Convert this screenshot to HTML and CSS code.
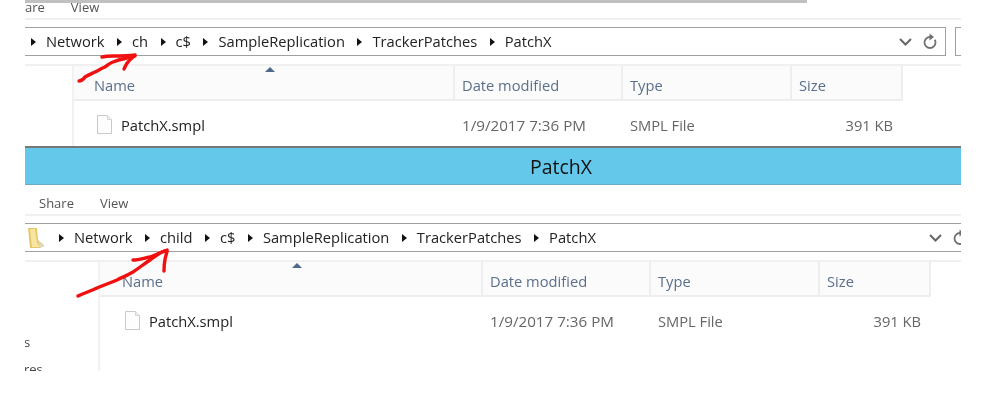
FILE: index.html
```html
<!DOCTYPE html>
<html lang="en">
<head>
  <meta charset="UTF-8">
  <meta name="viewport" content="width=device-width, initial-scale=1.0">
  <title>PatchX</title>
  <link rel="stylesheet" href="styles.css">
</head>
<body>
  <div class="shot">
    <div class="top-strip"></div>
    <div class="menu menu-first">
      <span class="menu-share">are</span>
      <span>View</span>
    </div>
    <div class="addr-row">
      <div class="addr">
        <div class="crumbs">
          <i class="sep"></i><span>Network</span>
          <i class="sep"></i><span>ch</span>
          <i class="sep"></i><span>c$</span>
          <i class="sep"></i><span>SampleReplication</span>
          <i class="sep"></i><span>TrackerPatches</span>
          <i class="sep"></i><span>PatchX</span>
        </div>
        <svg class="chev" width="13" height="8" viewBox="0 0 13 8"><path d="M1 1l5.500 5.500L12 1" fill="none" stroke="#666" stroke-width="2"/></svg>
        <svg class="refresh" width="14" height="17" viewBox="0 0 14 17"><path d="M7 4a5.500 5.500 0 1 0 5.500 5.500c0-1-.3-2-.8-2.800" fill="none" stroke="#707070" stroke-width="1.800"/><path d="M6.500.5v7l4.500-3.500z" fill="#707070"/></svg>
      </div>
      <div class="search-box"></div>
    </div>
    <div class="files">
      <div class="head">
        <div class="col col-name"><b class="sort"></b>Name</div>
        <div class="col col-date">Date modified</div>
        <div class="col col-type">Type</div>
        <div class="col col-size">Size</div>
      </div>
      <div class="row">
        <div class="cell col-name">
          <svg class="doc" width="17" height="19" viewBox="0 0 17 19"><path d="M1.500.5h10l4 4v14h-14z" fill="#fdfdfd" stroke="#c9c9c9"/><path d="M11.500.5v4h4" fill="#efefef" stroke="#d5d5d5"/></svg>
          <span class="fname">PatchX.smpl</span>
        </div>
        <div class="cell col-date">1/9/2017 7:36 PM</div>
        <div class="cell col-type">SMPL File</div>
        <div class="cell col-size">391 KB</div>
      </div>
    </div>

    <div class="title">PatchX</div>
    <div class="menu menu-second">
      <span>Share</span>
      <span>View</span>
    </div>
    <div class="addr-row addr-row-second">
      <div class="addr">
        <svg class="folder" width="17" height="21" viewBox="0 0 17 21"><path d="M0 1h9l1 12 6 5v1l-4 2H2z" fill="#e6c767"/><path d="M2 2h5l2 14 3 4H4z" fill="#f7e6a0"/><path d="M10 13l6 6-4 2-1-4z" fill="#dcd8c8"/></svg>
        <div class="crumbs">
          <i class="sep"></i><span>Network</span>
          <i class="sep"></i><span>child</span>
          <i class="sep"></i><span>c$</span>
          <i class="sep"></i><span>SampleReplication</span>
          <i class="sep"></i><span>TrackerPatches</span>
          <i class="sep"></i><span>PatchX</span>
        </div>
        <svg class="chev" width="13" height="8" viewBox="0 0 13 8"><path d="M1 1l5.500 5.500L12 1" fill="none" stroke="#666" stroke-width="2"/></svg>
        <svg class="refresh" width="14" height="17" viewBox="0 0 14 17"><path d="M7 4a5.500 5.500 0 1 0 5.500 5.500c0-1-.3-2-.8-2.800" fill="none" stroke="#707070" stroke-width="1.800"/><path d="M6.500.5v7l4.500-3.500z" fill="#707070"/></svg>
      </div>
    </div>
    <div class="lower">
      <div class="nav">
        <span>s</span>
        <span>res</span>
      </div>
      <div class="files files-second">
        <div class="head">
          <div class="col col-name"><b class="sort"></b>Name</div>
          <div class="col col-date">Date modified</div>
          <div class="col col-type">Type</div>
          <div class="col col-size">Size</div>
        </div>
        <div class="row">
          <div class="cell col-name">
            <svg class="doc" width="17" height="19" viewBox="0 0 17 19"><path d="M1.500.5h10l4 4v14h-14z" fill="#fdfdfd" stroke="#c9c9c9"/><path d="M11.500.5v4h4" fill="#efefef" stroke="#d5d5d5"/></svg>
            <span class="fname">PatchX.smpl</span>
          </div>
          <div class="cell col-date">1/9/2017 7:36 PM</div>
          <div class="cell col-type">SMPL File</div>
          <div class="cell col-size">391 KB</div>
        </div>
      </div>
    </div>
  </div>

  <!-- hand drawn red arrows on top of the screenshot -->
  <svg class="scribble" width="982" height="412" viewBox="0 0 982 412">
    <path d="M79 81c2 0 4-1 6-4 3-2 6-3 10-5 4-2 7-4 10-5 3-2 5-4 8-5 5-2 9-3 14-4 3-1 5-2 8-2" />
    <path d="M102 57c4-1 7-1 11-1 8 0 15 0 22-1-2 3-5 4-7 7-2 2-3 5-4 7" />
    <path d="M78 296c6-3 13-5 19-8 7-3 13-5 20-8 6-3 11-5 16-8 6-4 11-8 17-12 4-3 8-6 12-8 2-1 3-1 5-1" />
    <path d="M133 260c6 0 11-2 17-3 6-2 11-5 17-7 0 4-2 7-2 10-1 4-1 7-1 11" />
  </svg>
</body>
</html>
```

FILE: styles.css
```css
body {
  margin: 0;
  background: white;
  font-family: "Open Sans", "Noto Sans", sans-serif;
  font-size: 14.7px;
  color: #222;
  overflow: hidden;
}
.shot {
  width: 936px;
  margin-left: 25px;
  overflow: hidden;
  filter: blur(0.35px);
}
.top-strip {
  width: 782px;
  height: 3px;
  background: #c0c0c0;
}
.menu {
  display: flex;
  font-size: 13px;
  color: #555;
  border-bottom: 2px solid #f0f0f0;
}
.menu-first {
  height: 15px;
  line-height: 8px;
  gap: 26px;
}
.menu-second {
  height: 29px;
  padding-left: 14px;
  line-height: 36px;
  gap: 26px;
}
.addr-row {
  display: flex;
  gap: 9px;
  padding-top: 7px;
  height: 29px;
  padding-bottom: 8px;
  border-bottom: 2px solid #f0f0f0;
}
.addr {
  flex: 1;
  display: flex;
  align-items: center;
  border: 1px solid #a0a0a0;
  border-left: 0;
  box-sizing: border-box;
  height: 29px;
  padding-right: 8px;
  color: #222;
}
.addr-row-second .addr {
  border-right: 0;
  padding-right: 0;
}
.search-box {
  width: 6px;
  height: 29px;
  box-sizing: border-box;
  border: 1px solid #a0a0a0;
  border-right: 0;
}
.crumbs {
  flex: 1;
  display: flex;
  align-items: center;
  padding-left: 6px;
  padding-bottom: 2px;
}
.folder {
  margin-left: 3px;
  margin-right: 8px;
}
.sep {
  width: 0;
  height: 0;
  margin-top: 2px;
  margin-right: 10px;
  border-left: 5px solid #111;
  border-top: 4.5px solid transparent;
  border-bottom: 4.5px solid transparent;
}
.crumbs span {
  margin-right: 12.5px;
}
.chev {
  margin-right: 11px;
}
.refresh {
  margin-bottom: 1px;
}
.addr-row-second .refresh {
  margin-right: -6px;
}
.files {
  margin-left: 47px;
  width: 831px;
  border-left: 2px solid #f2f2f2;
  box-sizing: border-box;
  height: 80px;
}
.head {
  display: flex;
  height: 35px;
  box-sizing: border-box;
  background: #fbfbfb;
  border-bottom: 2px solid #eeeeee;
  border-right: 2px solid #eeeeee;
  color: #5b6f8c;
  line-height: 38px;
}
.col {
  position: relative;
  height: 100%;
  box-sizing: border-box;
  padding-left: 7px;
  border-right: 2px solid #eeeeee;
  flex-shrink: 0;
}
.col-name {
  width: 381px;
  padding-left: 20px;
}
.col-date {
  width: 168px;
}
.col-type {
  width: 169px;
}
.col-size {
  width: 109px;
  border-right: 0;
}
.sort {
  position: absolute;
  left: 191px;
  top: 1px;
  border-left: 5.5px solid transparent;
  border-right: 5.5px solid transparent;
  border-bottom: 5px solid #4d6a8c;
}
.row {
  display: flex;
  height: 47px;
  align-items: center;
  color: #666;
}
.cell {
  box-sizing: border-box;
  padding-left: 7px;
  flex-shrink: 0;
}
.cell.col-date {
  font-size: 15.2px;
}
.cell.col-name {
  display: flex;
  align-items: center;
  gap: 8px;
  padding-left: 22px;
  color: #222;
}
.cell.col-size {
  padding-right: 8px;
  text-align: right;
}
.title {
  height: 39px;
  box-sizing: border-box;
  padding-left: 136px;
  background: #63c8ea;
  border-top: 2px solid #777;
  border-bottom: 1px solid #6fa9c6;
  text-align: center;
  font-size: 19.5px;
  line-height: 37px;
  color: #111;
}
.lower {
  display: flex;
  height: 109px;
  color: #444;
}
.nav {
  width: 73px;
  display: flex;
  flex-direction: column;
  justify-content: flex-end;
  font-size: 13px;
  line-height: 27px;
  margin-bottom: -12px;
  margin-left: -1px;
}
.lower .files {
  margin-left: 1px;
  width: 833px;
  height: 109px;
}
.files-second .col-name {
  width: 383px;
  padding-left: 22px;
}
.files-second .sort {
  left: 192px;
}
.files-second .cell.col-name {
  padding-left: 24px;
}
.scribble {
  position: absolute;
  left: 0;
  top: 0;
  fill: none;
  stroke: #f01010;
  stroke-width: 3.4;
  stroke-linecap: round;
  stroke-linejoin: round;
  pointer-events: none;
}
```
